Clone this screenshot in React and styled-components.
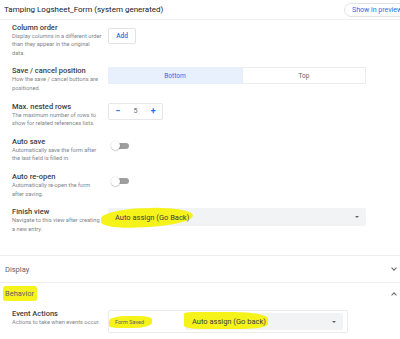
import React from 'react';
import styled, { createGlobalStyle } from 'styled-components';

const GlobalStyle = createGlobalStyle`
  body {
    margin: 0;
    background: #fff;
    font-family: Roboto, "Liberation Sans", sans-serif;
    color: #3c4043;
  }
`;

const settings = [
  { label: 'Column order', desc: 'Display columns in a different order\nthan they appear in the original\ndata.', control: 'add' },
  { label: 'Save / cancel position', desc: 'How the save / cancel buttons are\npositioned.', control: 'segment' },
  { label: 'Max. nested rows', desc: 'The maximum number of rows to\nshow for related references lists.', control: 'stepper' },
  { label: 'Auto save', desc: 'Automatically save the form after\nthe last field is filled in.', control: 'toggle' },
  { label: 'Auto re-open', desc: 'Automatically re-open the form\nafter saving.', control: 'toggle' },
  { label: 'Finish view', desc: 'Navigate to this view after creating\na new entry.', control: 'select' },
];

const App = () => {
  const renderControl = (type) => {
    switch (type) {
      case 'add':
        return <AddButton>Add</AddButton>;
      case 'segment':
        return (
          <Segment>
            <SegmentOption active>Bottom</SegmentOption>
            <SegmentOption>Top</SegmentOption>
          </Segment>
        );
      case 'stepper':
        return (
          <Stepper>
            <StepButton>−</StepButton>
            <StepValue>5</StepValue>
            <StepButton>+</StepButton>
          </Stepper>
        );
      case 'toggle':
        return <Toggle><Knob /></Toggle>;
      case 'select':
        return (
          <Select>
            <Marked blob="finish">Auto assign (Go Back)</Marked>
            <Caret />
          </Select>
        );
      default:
        return null;
    }
  };

  return (
    <Page>
      <GlobalStyle />
      <Header>
        <Title>Tamping Logsheet_Form (system generated)</Title>
        <PreviewButton>Show in preview</PreviewButton>
      </Header>
      <Settings>
        {settings.map((s) => (
          <Row key={s.label}>
            <Info>
              <Label>{s.label}</Label>
              <Desc>{s.desc}</Desc>
            </Info>
            <Control kind={s.control}>{renderControl(s.control)}</Control>
          </Row>
        ))}
      </Settings>
      <Section>
        <SectionTitle>Display</SectionTitle>
        <Chevron up={false} />
      </Section>
      <Section open>
        <SectionTitle><Marked blob="behavior">Behavior</Marked></SectionTitle>
        <Chevron up />
      </Section>
      <EventRow>
        <Info>
          <Label>Event Actions</Label>
          <Desc>Actions to take when events occur.</Desc>
        </Info>
        <EventBox>
          <EventName><Marked blob="event">Form Saved</Marked></EventName>
          <EventSelect>
            <Marked blob="action">Auto assign (Go back)</Marked>
            <Caret />
          </EventSelect>
        </EventBox>
      </EventRow>
    </Page>
  );
};

export default App;

const Page = styled.div`
  width: 400px;
  height: 339px;
  overflow: hidden;
`;

const Header = styled.div`
  height: 19px;
  display: flex;
  align-items: center;
  justify-content: space-between;
  padding-left: 4px;
  border-bottom: 1px solid #f0f0f0;
`;

const Title = styled.div`
  font-size: 8px;
  color: #202124;
`;

const PreviewButton = styled.div`
  flex: none;
  width: 70px;
  margin-right: -14px;
  height: 14px;
  box-sizing: border-box;
  border: 1px solid #e3e3e3;
  border-radius: 8px;
  padding-left: 7px;
  font-size: 7px;
  line-height: 12px;
  color: #1a73e8;
`;

const Settings = styled.div`
  display: flex;
  flex-direction: column;
  gap: 10.3px;
  padding: 3.5px 0 22px 12px;
`;

const Row = styled.div`
  display: grid;
  grid-template-columns: 96px 258px;
  align-items: start;
`;

const Info = styled.div`
  display: flex;
  flex-direction: column;
`;

const Label = styled.div`
  font-size: 7.5px;
  font-weight: 500;
  line-height: 8px;
  color: #3c4043;
`;

const Desc = styled.div`
  font-size: 5.7px;
  line-height: 8.5px;
  color: #80868b;
  white-space: pre-line;
`;

const Control = styled.div`
  padding-top: ${(p) => (p.kind === 'add' ? '4px' : p.kind === 'toggle' ? '4px' : '0')};
`;

const AddButton = styled.div`
  width: 28px;
  height: 16px;
  box-sizing: border-box;
  border: 1px solid #e3e3e3;
  border-radius: 2px;
  display: flex;
  align-items: center;
  justify-content: center;
  font-size: 6.5px;
  font-weight: 500;
  color: #1a73e8;
`;

const Segment = styled.div`
  display: grid;
  grid-template-columns: 134px 1fr;
  height: 17px;
`;

const SegmentOption = styled.div`
  display: flex;
  align-items: center;
  justify-content: center;
  font-size: 6.5px;
  background: ${(p) => (p.active ? '#e8f0fe' : '#fff')};
  color: ${(p) => (p.active ? '#1a73e8' : '#5f6368')};
  border: 1px solid ${(p) => (p.active ? '#e8f0fe' : '#ececec')};
`;

const Stepper = styled.div`
  width: 55px;
  height: 17px;
  box-sizing: border-box;
  border: 1px solid #e6e6e6;
  border-radius: 2px;
  display: grid;
  grid-template-columns: 1fr 1fr 1fr;
  align-items: center;
  justify-items: center;
`;

const StepButton = styled.span`
  font-size: 9px;
  font-weight: 700;
  color: #1a73e8;
`;

const StepValue = styled.span`
  font-size: 7px;
  color: #5f6368;
`;

const Toggle = styled.div`
  position: relative;
  margin-left: 6px;
  width: 15px;
  height: 6px;
  margin-top: 1px;
  border-radius: 3px;
  background: #9e9e9e;
`;

const Knob = styled.div`
  position: absolute;
  left: -3px;
  top: -1.5px;
  width: 9px;
  height: 9px;
  border-radius: 50%;
  background: #fff;
  box-shadow: 0 0.5px 1.5px rgba(0, 0, 0, 0.35);
`;

const Select = styled.div`
  height: 18px;
  background: #f1f3f4;
  border-radius: 2px;
  display: flex;
  align-items: center;
  justify-content: space-between;
  padding: 0 7px;
  font-size: 7.5px;
  color: #3c4043;
`;

const Caret = styled.span`
  width: 0;
  height: 0;
  border-left: 2.5px solid transparent;
  border-right: 2.5px solid transparent;
  border-top: 2.5px solid #5f6368;
`;

const blobs = {
  finish: 'left: -14px; right: -4px; top: -5px; bottom: -5px; border-radius: 45% 55% 50% 40%; transform: rotate(-3deg);',
  behavior: 'left: -2px; right: -3px; top: -3px; bottom: -3px; border-radius: 3px;',
  event: 'left: -6px; right: -8px; top: -3px; bottom: -3px; border-radius: 40% 30% 45% 20%;',
  action: 'left: -8px; right: -2px; top: -5px; bottom: -3px; border-radius: 10% 40% 30% 20%;',
};

const Marked = styled.span`
  position: relative;
  z-index: 0;
  &::before {
    content: '';
    position: absolute;
    z-index: -1;
    background: #f5f31a;
    ${(p) => blobs[p.blob]}
  }
`;

const Section = styled.div`
  height: ${(p) => (p.open ? '21px' : '26px')};
  display: flex;
  align-items: center;
  justify-content: space-between;
  padding: 0 4px 0 5px;
  border-bottom: ${(p) => (p.open ? 'none' : '1px solid #eeeeee')};
  border-top: ${(p) => (p.open ? 'none' : '1px solid #eeeeee')};
`;

const SectionTitle = styled.div`
  font-size: 7.5px;
  color: #5f6368;
`;

const Chevron = styled.span`
  width: 3px;
  height: 3px;
  border-right: 1px solid #5f6368;
  border-bottom: 1px solid #5f6368;
  transform: ${(p) => (p.up ? 'translateY(1px) rotate(-135deg)' : 'translateY(-1px) rotate(45deg)')};
`;

const EventRow = styled.div`
  display: grid;
  grid-template-columns: 96px 240px;
  padding: 6px 0 0 12px;
`;

const EventBox = styled.div`
  height: 23px;
  box-sizing: border-box;
  border: 1px solid #ececec;
  border-radius: 2px;
  display: grid;
  grid-template-columns: 70px 158px;
  align-items: center;
  padding-left: 6px;
`;

const EventName = styled.div`
  font-size: 5.5px;
  color: #5f6368;
`;

const EventSelect = styled(Select)`
  height: 17px;
  padding: 0 7px;
`;
